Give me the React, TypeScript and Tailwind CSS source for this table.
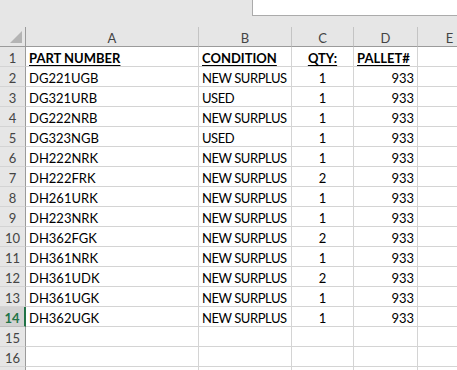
const rows: [string, string, string, string][] = [
  ["DG221UGB", "NEW SURPLUS", "1", "933"],
  ["DG321URB", "USED", "1", "933"],
  ["DG222NRB", "NEW SURPLUS", "1", "933"],
  ["DG323NGB", "USED", "1", "933"],
  ["DH222NRK", "NEW SURPLUS", "1", "933"],
  ["DH222FRK", "NEW SURPLUS", "2", "933"],
  ["DH261URK", "NEW SURPLUS", "1", "933"],
  ["DH223NRK", "NEW SURPLUS", "1", "933"],
  ["DH362FGK", "NEW SURPLUS", "2", "933"],
  ["DH361NRK", "NEW SURPLUS", "1", "933"],
  ["DH361UDK", "NEW SURPLUS", "2", "933"],
  ["DH361UGK", "NEW SURPLUS", "1", "933"],
  ["DH362UGK", "NEW SURPLUS", "1", "933"],
];

const cell = "h-5 border-r border-b border-[#d4d4d4] bg-white leading-[20px] pt-[1px] whitespace-nowrap overflow-hidden";

function RowHead({ n, active }: { n?: number; active?: boolean }) {
  return (
    <div
      className={
        active
          ? "h-5 w-[26px] border-b border-[#bdbdbd] border-r-2 border-r-[#217346] bg-[#d2d2d2] text-[#217346] font-bold text-center leading-[20px] pt-[1px]"
          : "h-5 w-[26px] border-b border-[#d4d4d4] border-r border-r-[#9b9b9b] bg-[#e6e6e6] text-[#444] text-center leading-[20px] pt-[1px]"
      }
    >
      {n}
    </div>
  );
}

export default function App() {
  return (
    <div
      className="w-[457px] h-[370px] overflow-hidden bg-[#e6e6e6] text-[13px] text-black"
      style={{ fontFamily: "Lato, 'Liberation Sans', sans-serif" }}
    >
      {/* formula bar strip */}
      <div className="h-[27px] flex">
        <div className="w-[252px]" />
        <div className="flex-1 h-4 bg-white border-l border-b border-[#ababab]" />
      </div>

      <div className="grid grid-cols-[26px_173px_93px_62px_64px_64px]">
        {/* column headers */}
        <div className="h-5 border-r border-b border-[#9b9b9b] bg-[#e6e6e6] relative">
          <svg className="absolute left-[10px] top-[4px]" width="12" height="12" viewBox="0 0 12 12">
            <polygon points="12,0 12,12 0,12" fill="#b4b4b4" />
          </svg>
        </div>
        {["A", "B", "C", "D", "E"].map((c) => (
          <div
            key={c}
            className="h-5 border-r border-r-[#c4c4c4] border-b border-b-[#9b9b9b] bg-[#e6e6e6] text-[#444] text-center leading-[20px] pt-[1px]"
          >
            {c}
          </div>
        ))}

        {/* header row */}
        <RowHead n={1} />
        <div className={cell + " pl-[3px] font-bold underline underline-offset-2"}>PART NUMBER</div>
        <div className={cell + " pl-[3px] font-bold underline underline-offset-2"}>CONDITION</div>
        <div className={cell + " text-center font-bold underline underline-offset-2"}>QTY:</div>
        <div className={cell + " pl-[3px] font-bold underline underline-offset-2"}>PALLET#</div>
        <div className={cell} />

        {rows.map((r, i) => (
          <div key={i} className="contents">
            <RowHead n={i + 2} active={i + 2 === 14} />
            <div className={cell + " pl-[3px]"}>{r[0]}</div>
            <div className={cell + " pl-[3px] tracking-[-0.45px]"}>{r[1]}</div>
            <div className={cell + " text-center"}>{r[2]}</div>
            <div className={cell + " text-right pr-[3px]"}>{r[3]}</div>
            <div className={cell} />
          </div>
        ))}

        {[15, 16, undefined].map((n, k) => (
          <div key={k} className="contents">
            <RowHead n={n} />
            <div className={cell} />
            <div className={cell} />
            <div className={cell} />
            <div className={cell} />
            <div className={cell} />
          </div>
        ))}
      </div>
    </div>
  );
}
